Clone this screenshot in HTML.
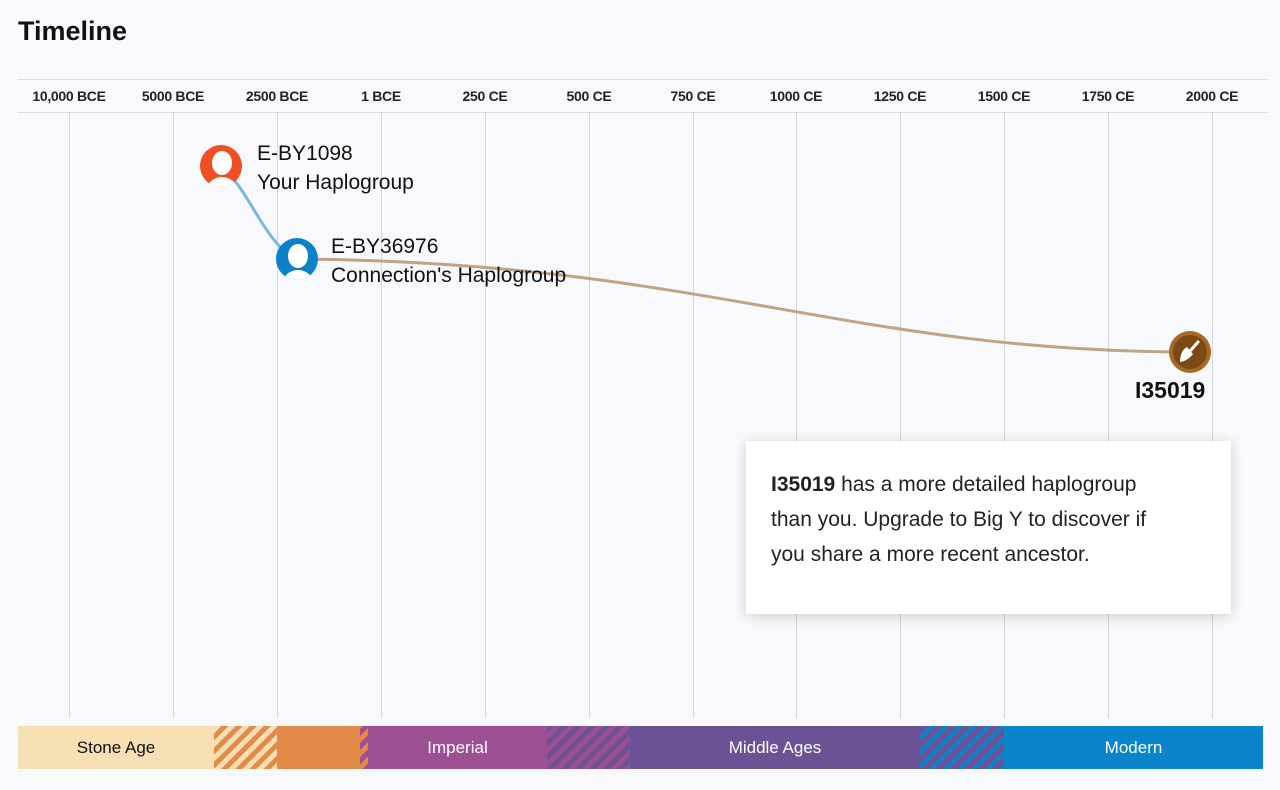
<!DOCTYPE html><html><head><style>
body{margin:0;width:1280px;height:790px;background:#f8f9fc;font-family:"Liberation Sans",Roboto,sans-serif;position:relative;overflow:hidden}
.t{position:absolute;left:18px;top:16px;font-size:27px;font-weight:bold;color:#111}
.hdr{position:absolute;left:18px;width:1249px;top:79px;height:32px;border-top:1px solid #ddd;border-bottom:1px solid #ddd}
.lab{position:absolute;top:88px;font-size:14px;font-weight:bold;color:#222;transform:translateX(-50%);white-space:nowrap;letter-spacing:-0.3px}
.vl{position:absolute;top:112px;height:606px;width:1px;background:#d4d6da}
.bar{position:absolute;top:726px;height:43px;display:flex;align-items:center;justify-content:center;font-size:17px;color:#fff}
.tip{position:absolute;left:746px;top:441px;width:485px;height:173px;background:#fff;box-shadow:0 2px 12px rgba(0,0,0,.18);box-sizing:border-box;padding:26px 48px 26px 25px;font-size:21px;line-height:35px;color:#222}
.nm{position:absolute;font-size:21px;color:#111;line-height:29px}
</style></head><body>
<div class="t">Timeline</div>
<div class="hdr"></div>
<div class="lab" style="left:69px">10,000 BCE</div>
<div class="lab" style="left:173px">5000 BCE</div>
<div class="lab" style="left:277px">2500 BCE</div>
<div class="lab" style="left:381px">1 BCE</div>
<div class="lab" style="left:485px">250 CE</div>
<div class="lab" style="left:589px">500 CE</div>
<div class="lab" style="left:693px">750 CE</div>
<div class="lab" style="left:796px">1000 CE</div>
<div class="lab" style="left:900px">1250 CE</div>
<div class="lab" style="left:1004px">1500 CE</div>
<div class="lab" style="left:1108px">1750 CE</div>
<div class="lab" style="left:1212px">2000 CE</div>
<div class="vl" style="left:69px"></div><div class="vl" style="left:173px"></div><div class="vl" style="left:277px"></div><div class="vl" style="left:381px"></div><div class="vl" style="left:485px"></div><div class="vl" style="left:589px"></div><div class="vl" style="left:693px"></div><div class="vl" style="left:796px"></div><div class="vl" style="left:900px"></div><div class="vl" style="left:1004px"></div><div class="vl" style="left:1108px"></div><div class="vl" style="left:1212px"></div>
<svg width="1280" height="790" style="position:absolute;left:0;top:0">
<path d="M221 166 C250 190,265 245,297 259" stroke="#7ab8dd" stroke-width="3" fill="none"/>
<path d="M297 259 C700 262,850 352,1190 352" stroke="#bfa385" stroke-width="3" fill="none"/>
<defs><clipPath id="c1"><circle cx="221" cy="166" r="21"/></clipPath><clipPath id="c2"><circle cx="297" cy="259" r="21"/></clipPath></defs>
<circle cx="221" cy="166" r="21" fill="#f04e23"/>
<g clip-path="url(#c1)" fill="#fff"><ellipse cx="222" cy="163" rx="10" ry="12"/><ellipse cx="222" cy="190" rx="15" ry="13"/></g>
<circle cx="297" cy="259" r="21" fill="#0a82c9"/>
<g clip-path="url(#c2)" fill="#fff"><ellipse cx="298" cy="256" rx="10" ry="12"/><ellipse cx="298" cy="283" rx="15" ry="13"/></g>
<circle cx="1190" cy="352" r="21" fill="#a86a22"/>
<circle cx="1190" cy="352" r="17" fill="#7b4a14"/>
<path d="M1180 362 C1180 354,1183 349,1187 347 L1193 354 C1190 358,1186 361,1180 362 Z" fill="#fff"/>
<path d="M1191 350 L1198 342" stroke="#fff" stroke-width="3" stroke-linecap="round"/>
<defs>
<pattern id="h1" width="10" height="10" patternUnits="userSpaceOnUse" patternTransform="rotate(45)"><rect width="10" height="10" fill="#f5dfb3"/><rect width="5" height="10" fill="#e38a48"/></pattern>
<pattern id="h2" width="10" height="10" patternUnits="userSpaceOnUse" patternTransform="rotate(45)"><rect width="10" height="10" fill="#9c4f93"/><rect width="5" height="10" fill="#6a5294"/></pattern>
<pattern id="h3" width="10" height="10" patternUnits="userSpaceOnUse" patternTransform="rotate(45)"><rect width="10" height="10" fill="#6a5294"/><rect width="5" height="10" fill="#1a7ac4"/></pattern>
<pattern id="h4" width="10" height="10" patternUnits="userSpaceOnUse" patternTransform="rotate(45)"><rect width="10" height="10" fill="#e38a48"/><rect width="5" height="10" fill="#9c4f93"/></pattern>
</defs>
<rect x="214" y="726" width="63" height="43" fill="url(#h1)"/>
<rect x="360" y="726" width="8" height="43" fill="url(#h4)"/>
<rect x="547" y="726" width="83" height="43" fill="url(#h2)"/>
<rect x="920" y="726" width="84" height="43" fill="url(#h3)"/>
</svg>
<div class="nm" style="left:257px;top:139px">E-BY1098<br>Your Haplogroup</div>
<div class="nm" style="left:331px;top:232px">E-BY36976<br>Connection's Haplogroup</div>
<div class="nm" style="left:1135px;top:376px;font-weight:bold;font-size:23px">I35019</div>
<div class="bar" style="left:18px;width:196px;background:#f5dfb3;color:#111">Stone Age</div>
<div class="bar" style="left:277px;width:83px;background:#e38a48"></div>
<div class="bar" style="left:368px;width:179px;background:#9c4f93">Imperial</div>
<div class="bar" style="left:630px;width:290px;background:#6a5294">Middle Ages</div>
<div class="bar" style="left:1004px;width:259px;background:#0a85cc">Modern</div>
<div class="tip"><b>I35019</b> has a more detailed haplogroup<br>than you. Upgrade to Big Y to discover if<br>you share a more recent ancestor.</div>
</body></html>
